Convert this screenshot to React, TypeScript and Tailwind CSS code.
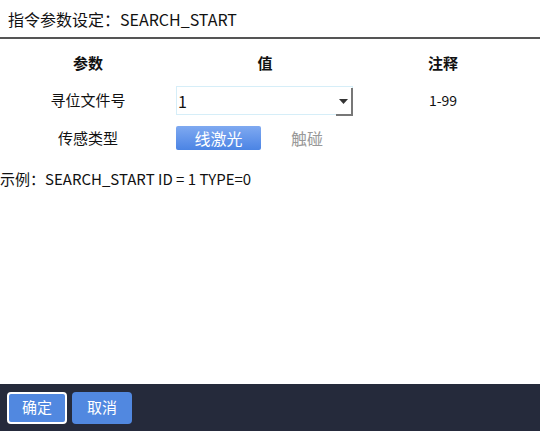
import React, { useState } from 'react';

const font = { fontFamily: '"Noto Sans CJK SC", "Noto Sans", sans-serif' };

const App: React.FC = () => {
  const [sensor, setSensor] = useState<'laser' | 'touch'>('laser');

  return (
    <div className="w-[540px] h-[431px] bg-white flex flex-col text-[#111]" style={font}>
      {/* Title */}
      <div className="h-[37px] flex items-center pl-2 text-[16px]">指令参数设定：SEARCH_START</div>
      <div className="h-[2px] bg-[#555]" />

      {/* Param table */}
      <div className="grid grid-cols-[176px_178px_178px] items-center mt-[12px]">
        <div className="text-center font-bold text-[15px] h-[24px] leading-[24px]">参数</div>
        <div className="text-center font-bold text-[15px] h-[24px] leading-[24px]">值</div>
        <div className="text-center font-bold text-[15px] h-[24px] leading-[24px]">注释</div>

        <div className="text-center text-[15px] mt-[11px]">寻位文件号</div>
        <div className="mt-[11px]">
          <div className="relative w-[177px] h-[29px] border border-[#d6eef8] bg-white flex items-center">
            <span className="pl-[1px] text-[16px]">1</span>
            <div className="absolute right-[-1px] top-[1px] w-[17px] h-[28px] border-r-2 border-b-2 border-[#777] flex items-center justify-center">
              <svg width="9" height="5" viewBox="0 0 9 5">
                <path d="M0 0 H9 L4.5 5 Z" fill="#333" />
              </svg>
            </div>
          </div>
        </div>
        <div className="text-center text-[14px] mt-[11px]">1-99</div>

        <div className="text-center text-[15px] mt-[11px]">传感类型</div>
        <div className="mt-[11px] flex items-center">
          <button
            onClick={() => setSensor('laser')}
            className={
              sensor === 'laser'
                ? 'w-[85px] h-[24px] rounded-[2px] bg-gradient-to-b from-[#7fa9f1] to-[#4b84e4] text-white text-[16px] leading-[24px]'
                : 'w-[85px] h-[24px] text-[#999] text-[16px] leading-[24px]'
            }
          >
            线激光
          </button>
          <button
            onClick={() => setSensor('touch')}
            className={
              sensor === 'touch'
                ? 'ml-[8px] w-[76px] h-[24px] rounded-[2px] bg-gradient-to-b from-[#7fa9f1] to-[#4b84e4] text-white text-[16px] leading-[24px]'
                : 'ml-[8px] w-[76px] h-[24px] text-[#999] text-[16px] leading-[24px]'
            }
          >
            触碰
          </button>
        </div>
        <div />
      </div>

      {/* Example */}
      <div className="mt-[18px] text-[15px]">示例：SEARCH_START ID = 1 TYPE=0</div>

      <div className="flex-1" />

      {/* Footer */}
      <div className="h-[47px] bg-[#252a3b] flex items-center gap-[5px] pl-[7px]">
        <button className="w-[60px] h-[32px] rounded-[4px] border-2 border-white bg-[#5188e0] text-white text-[15px]">确定</button>
        <button className="w-[60px] h-[32px] rounded-[4px] bg-[#5188e0] text-white text-[15px]">取消</button>
      </div>
    </div>
  );
};

export default App;
